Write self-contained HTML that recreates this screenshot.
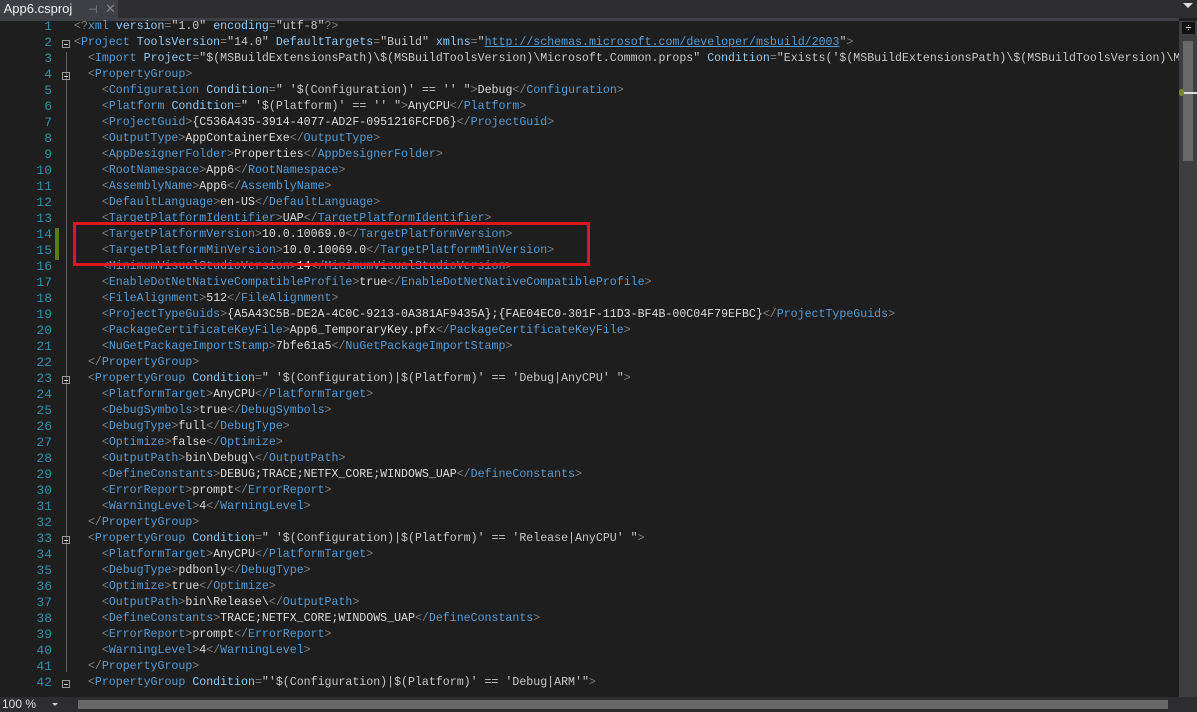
<!DOCTYPE html>
<html><head><meta charset="utf-8"><style>
body{margin:0;width:1197px;height:712px;background:#1e1e1e;overflow:hidden;position:relative;font-family:"Liberation Mono",monospace}
.tabbar{position:absolute;left:0;top:0;width:1197px;height:18px;background:#2d2d30}
.tab{position:absolute;left:0;top:0;width:118px;height:18px;background:#3f3f46;color:#f1f1f1;font:13px "Liberation Sans",sans-serif;line-height:18px}
.tabline{position:absolute;left:0;top:18px;width:1179px;height:3px;background:#3f3f46}
.l{position:absolute;left:0;width:1179px;overflow:hidden;height:16px;line-height:16px;font-size:11.6px;white-space:pre;color:#dcdcdc}
.n{position:absolute;left:0;width:52px;text-align:right;color:#2b91af;font-size:13px}
.c{position:absolute;left:74px}
.t{color:#569cd6}.d{color:#808080}.a{color:#92caf4}.v{color:#c8c8c8}.u{color:#569cd6;text-decoration:underline}
.fold{position:absolute;left:62px;width:8px;height:8px;border:1px solid #999;box-sizing:border-box}
.fold:after{content:"";position:absolute;left:1px;top:3px;width:4px;height:1px;background:#ccc}
.vl{position:absolute;left:66px;width:1px;background:#666}
.vs{position:absolute;left:1179px;top:21px;width:18px;height:676px;background:#3e3e42}
.thumb{position:absolute;left:1183px;top:41px;width:10px;height:120px;background:#686868}
.hs{position:absolute;left:0;top:697px;width:1197px;height:15px;background:#2d2d30}
</style></head><body>
<div class="tabbar"></div>
<div class="tab">&nbsp;App6.csproj</div>
<div style="position:absolute;left:88px;top:3px;color:#888;font:11px sans-serif">⊣</div>
<div style="position:absolute;left:105px;top:1px;color:#888;font:13px sans-serif">✕</div>
<div style="position:absolute;left:1183px;top:3px;width:0;height:0;border-left:5px solid transparent;border-right:5px solid transparent;border-top:5px solid #ddd"></div>
<div class="tabline"></div>
<div class="vs"></div><div class="thumb"></div>
<div style="position:absolute;left:1182px;top:22px;width:13px;height:12px;background:#111;color:#fff;font:11px sans-serif;text-align:center;line-height:12px">÷</div>
<div style="position:absolute;left:1181px;top:92px;width:16px;height:2px;background:#ddd"></div>
<div style="position:absolute;left:1179px;top:89px;width:5px;height:7px;background:#7a8a30;border-radius:3px"></div>
<div class="hs"></div>
<div style="position:absolute;left:2px;top:697px;color:#ddd;font:12px 'Liberation Sans',sans-serif;line-height:15px">100 %</div>
<div style="position:absolute;left:52px;top:703px;border-left:3px solid transparent;border-right:3px solid transparent;border-top:3px solid #ccc"></div>
<div style="position:absolute;left:78px;top:700px;width:1090px;height:9px;background:#686868"></div>
<div class="vl" style="top:52px;height:620px"></div>
<div style="position:absolute;left:55px;top:228px;width:4px;height:32px;background:#5a7a20"></div>

<div class="fold" style="top:40px"></div>
<div class="fold" style="top:72px"></div>
<div class="fold" style="top:376px"></div>
<div class="fold" style="top:536px"></div>
<div class="fold" style="top:680px"></div>

<div class="l" style="top:19px"><span class="n">1</span><span class="c"><span class="d">&lt;?</span><span class="t">xml</span> <span class="a">version</span><span class="d">=</span><span class="v">"1.0"</span> <span class="a">encoding</span><span class="d">=</span><span class="v">"utf-8"</span><span class="d">?&gt;</span></span></div>
<div class="l" style="top:35px"><span class="n">2</span><span class="c"><span class="d">&lt;</span><span class="t">Project</span> <span class="a">ToolsVersion</span><span class="d">=</span><span class="v">"14.0"</span> <span class="a">DefaultTargets</span><span class="d">=</span><span class="v">"Build"</span> <span class="a">xmlns</span><span class="d">=</span><span class="v">"</span><span class="u">http://schemas.microsoft.com/developer/msbuild/2003</span><span class="v">"</span><span class="d">&gt;</span></span></div>
<div class="l" style="top:51px"><span class="n">3</span><span class="c">  <span class="d">&lt;</span><span class="t">Import</span> <span class="a">Project</span><span class="d">=</span><span class="v">"$(MSBuildExtensionsPath)\$(MSBuildToolsVersion)\Microsoft.Common.props"</span> <span class="a">Condition</span><span class="d">=</span><span class="v">"Exists('$(MSBuildExtensionsPath)\$(MSBuildToolsVersion)\Microsoft</span></span></div>
<div class="l" style="top:67px"><span class="n">4</span><span class="c">  <span class="d">&lt;</span><span class="t">PropertyGroup</span><span class="d">&gt;</span></span></div>
<div class="l" style="top:83px"><span class="n">5</span><span class="c">    <span class="d">&lt;</span><span class="t">Configuration</span> <span class="a">Condition</span><span class="d">=</span><span class="v">" '$(Configuration)' == '' "</span><span class="d">&gt;</span>Debug<span class="d">&lt;/</span><span class="t">Configuration</span><span class="d">&gt;</span></span></div>
<div class="l" style="top:99px"><span class="n">6</span><span class="c">    <span class="d">&lt;</span><span class="t">Platform</span> <span class="a">Condition</span><span class="d">=</span><span class="v">" '$(Platform)' == '' "</span><span class="d">&gt;</span>AnyCPU<span class="d">&lt;/</span><span class="t">Platform</span><span class="d">&gt;</span></span></div>
<div class="l" style="top:115px"><span class="n">7</span><span class="c">    <span class="d">&lt;</span><span class="t">ProjectGuid</span><span class="d">&gt;</span>{C536A435-3914-4077-AD2F-0951216FCFD6}<span class="d">&lt;/</span><span class="t">ProjectGuid</span><span class="d">&gt;</span></span></div>
<div class="l" style="top:131px"><span class="n">8</span><span class="c">    <span class="d">&lt;</span><span class="t">OutputType</span><span class="d">&gt;</span>AppContainerExe<span class="d">&lt;/</span><span class="t">OutputType</span><span class="d">&gt;</span></span></div>
<div class="l" style="top:147px"><span class="n">9</span><span class="c">    <span class="d">&lt;</span><span class="t">AppDesignerFolder</span><span class="d">&gt;</span>Properties<span class="d">&lt;/</span><span class="t">AppDesignerFolder</span><span class="d">&gt;</span></span></div>
<div class="l" style="top:163px"><span class="n">10</span><span class="c">    <span class="d">&lt;</span><span class="t">RootNamespace</span><span class="d">&gt;</span>App6<span class="d">&lt;/</span><span class="t">RootNamespace</span><span class="d">&gt;</span></span></div>
<div class="l" style="top:179px"><span class="n">11</span><span class="c">    <span class="d">&lt;</span><span class="t">AssemblyName</span><span class="d">&gt;</span>App6<span class="d">&lt;/</span><span class="t">AssemblyName</span><span class="d">&gt;</span></span></div>
<div class="l" style="top:195px"><span class="n">12</span><span class="c">    <span class="d">&lt;</span><span class="t">DefaultLanguage</span><span class="d">&gt;</span>en-US<span class="d">&lt;/</span><span class="t">DefaultLanguage</span><span class="d">&gt;</span></span></div>
<div class="l" style="top:211px"><span class="n">13</span><span class="c">    <span class="d">&lt;</span><span class="t">TargetPlatformIdentifier</span><span class="d">&gt;</span>UAP<span class="d">&lt;/</span><span class="t">TargetPlatformIdentifier</span><span class="d">&gt;</span></span></div>
<div class="l" style="top:227px"><span class="n">14</span><span class="c">    <span class="d">&lt;</span><span class="t">TargetPlatformVersion</span><span class="d">&gt;</span>10.0.10069.0<span class="d">&lt;/</span><span class="t">TargetPlatformVersion</span><span class="d">&gt;</span></span></div>
<div class="l" style="top:243px"><span class="n">15</span><span class="c">    <span class="d">&lt;</span><span class="t">TargetPlatformMinVersion</span><span class="d">&gt;</span>10.0.10069.0<span class="d">&lt;/</span><span class="t">TargetPlatformMinVersion</span><span class="d">&gt;</span></span></div>
<div class="l" style="top:259px"><span class="n">16</span><span class="c">    <span class="d">&lt;</span><span class="t">MinimumVisualStudioVersion</span><span class="d">&gt;</span>14<span class="d">&lt;/</span><span class="t">MinimumVisualStudioVersion</span><span class="d">&gt;</span></span></div>
<div class="l" style="top:275px"><span class="n">17</span><span class="c">    <span class="d">&lt;</span><span class="t">EnableDotNetNativeCompatibleProfile</span><span class="d">&gt;</span>true<span class="d">&lt;/</span><span class="t">EnableDotNetNativeCompatibleProfile</span><span class="d">&gt;</span></span></div>
<div class="l" style="top:291px"><span class="n">18</span><span class="c">    <span class="d">&lt;</span><span class="t">FileAlignment</span><span class="d">&gt;</span>512<span class="d">&lt;/</span><span class="t">FileAlignment</span><span class="d">&gt;</span></span></div>
<div class="l" style="top:307px"><span class="n">19</span><span class="c">    <span class="d">&lt;</span><span class="t">ProjectTypeGuids</span><span class="d">&gt;</span>{A5A43C5B-DE2A-4C0C-9213-0A381AF9435A};{FAE04EC0-301F-11D3-BF4B-00C04F79EFBC}<span class="d">&lt;/</span><span class="t">ProjectTypeGuids</span><span class="d">&gt;</span></span></div>
<div class="l" style="top:323px"><span class="n">20</span><span class="c">    <span class="d">&lt;</span><span class="t">PackageCertificateKeyFile</span><span class="d">&gt;</span>App6_TemporaryKey.pfx<span class="d">&lt;/</span><span class="t">PackageCertificateKeyFile</span><span class="d">&gt;</span></span></div>
<div class="l" style="top:339px"><span class="n">21</span><span class="c">    <span class="d">&lt;</span><span class="t">NuGetPackageImportStamp</span><span class="d">&gt;</span>7bfe61a5<span class="d">&lt;/</span><span class="t">NuGetPackageImportStamp</span><span class="d">&gt;</span></span></div>
<div class="l" style="top:355px"><span class="n">22</span><span class="c">  <span class="d">&lt;/</span><span class="t">PropertyGroup</span><span class="d">&gt;</span></span></div>
<div class="l" style="top:371px"><span class="n">23</span><span class="c">  <span class="d">&lt;</span><span class="t">PropertyGroup</span> <span class="a">Condition</span><span class="d">=</span><span class="v">" '$(Configuration)|$(Platform)' == 'Debug|AnyCPU' "</span><span class="d">&gt;</span></span></div>
<div class="l" style="top:387px"><span class="n">24</span><span class="c">    <span class="d">&lt;</span><span class="t">PlatformTarget</span><span class="d">&gt;</span>AnyCPU<span class="d">&lt;/</span><span class="t">PlatformTarget</span><span class="d">&gt;</span></span></div>
<div class="l" style="top:403px"><span class="n">25</span><span class="c">    <span class="d">&lt;</span><span class="t">DebugSymbols</span><span class="d">&gt;</span>true<span class="d">&lt;/</span><span class="t">DebugSymbols</span><span class="d">&gt;</span></span></div>
<div class="l" style="top:419px"><span class="n">26</span><span class="c">    <span class="d">&lt;</span><span class="t">DebugType</span><span class="d">&gt;</span>full<span class="d">&lt;/</span><span class="t">DebugType</span><span class="d">&gt;</span></span></div>
<div class="l" style="top:435px"><span class="n">27</span><span class="c">    <span class="d">&lt;</span><span class="t">Optimize</span><span class="d">&gt;</span>false<span class="d">&lt;/</span><span class="t">Optimize</span><span class="d">&gt;</span></span></div>
<div class="l" style="top:451px"><span class="n">28</span><span class="c">    <span class="d">&lt;</span><span class="t">OutputPath</span><span class="d">&gt;</span>bin\Debug\<span class="d">&lt;/</span><span class="t">OutputPath</span><span class="d">&gt;</span></span></div>
<div class="l" style="top:467px"><span class="n">29</span><span class="c">    <span class="d">&lt;</span><span class="t">DefineConstants</span><span class="d">&gt;</span>DEBUG;TRACE;NETFX_CORE;WINDOWS_UAP<span class="d">&lt;/</span><span class="t">DefineConstants</span><span class="d">&gt;</span></span></div>
<div class="l" style="top:483px"><span class="n">30</span><span class="c">    <span class="d">&lt;</span><span class="t">ErrorReport</span><span class="d">&gt;</span>prompt<span class="d">&lt;/</span><span class="t">ErrorReport</span><span class="d">&gt;</span></span></div>
<div class="l" style="top:499px"><span class="n">31</span><span class="c">    <span class="d">&lt;</span><span class="t">WarningLevel</span><span class="d">&gt;</span>4<span class="d">&lt;/</span><span class="t">WarningLevel</span><span class="d">&gt;</span></span></div>
<div class="l" style="top:515px"><span class="n">32</span><span class="c">  <span class="d">&lt;/</span><span class="t">PropertyGroup</span><span class="d">&gt;</span></span></div>
<div class="l" style="top:531px"><span class="n">33</span><span class="c">  <span class="d">&lt;</span><span class="t">PropertyGroup</span> <span class="a">Condition</span><span class="d">=</span><span class="v">" '$(Configuration)|$(Platform)' == 'Release|AnyCPU' "</span><span class="d">&gt;</span></span></div>
<div class="l" style="top:547px"><span class="n">34</span><span class="c">    <span class="d">&lt;</span><span class="t">PlatformTarget</span><span class="d">&gt;</span>AnyCPU<span class="d">&lt;/</span><span class="t">PlatformTarget</span><span class="d">&gt;</span></span></div>
<div class="l" style="top:563px"><span class="n">35</span><span class="c">    <span class="d">&lt;</span><span class="t">DebugType</span><span class="d">&gt;</span>pdbonly<span class="d">&lt;/</span><span class="t">DebugType</span><span class="d">&gt;</span></span></div>
<div class="l" style="top:579px"><span class="n">36</span><span class="c">    <span class="d">&lt;</span><span class="t">Optimize</span><span class="d">&gt;</span>true<span class="d">&lt;/</span><span class="t">Optimize</span><span class="d">&gt;</span></span></div>
<div class="l" style="top:595px"><span class="n">37</span><span class="c">    <span class="d">&lt;</span><span class="t">OutputPath</span><span class="d">&gt;</span>bin\Release\<span class="d">&lt;/</span><span class="t">OutputPath</span><span class="d">&gt;</span></span></div>
<div class="l" style="top:611px"><span class="n">38</span><span class="c">    <span class="d">&lt;</span><span class="t">DefineConstants</span><span class="d">&gt;</span>TRACE;NETFX_CORE;WINDOWS_UAP<span class="d">&lt;/</span><span class="t">DefineConstants</span><span class="d">&gt;</span></span></div>
<div class="l" style="top:627px"><span class="n">39</span><span class="c">    <span class="d">&lt;</span><span class="t">ErrorReport</span><span class="d">&gt;</span>prompt<span class="d">&lt;/</span><span class="t">ErrorReport</span><span class="d">&gt;</span></span></div>
<div class="l" style="top:643px"><span class="n">40</span><span class="c">    <span class="d">&lt;</span><span class="t">WarningLevel</span><span class="d">&gt;</span>4<span class="d">&lt;/</span><span class="t">WarningLevel</span><span class="d">&gt;</span></span></div>
<div class="l" style="top:659px"><span class="n">41</span><span class="c">  <span class="d">&lt;/</span><span class="t">PropertyGroup</span><span class="d">&gt;</span></span></div>
<div class="l" style="top:675px"><span class="n">42</span><span class="c">  <span class="d">&lt;</span><span class="t">PropertyGroup</span> <span class="a">Condition</span><span class="d">=</span><span class="v">"'$(Configuration)|$(Platform)' == 'Debug|ARM'"</span><span class="d">&gt;</span></span></div>
<div style="position:absolute;left:73px;top:222px;width:511px;height:38px;border:3px solid #e0161c"></div>
</body></html>
